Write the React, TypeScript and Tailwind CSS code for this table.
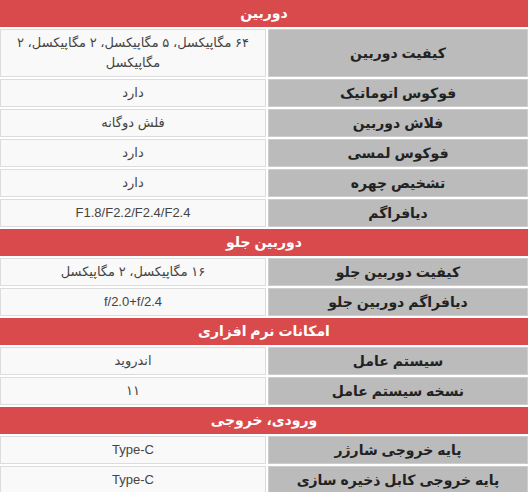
import React from "react";

type Section = {
  title: string;
  rows: { label: string; value: string }[];
};

const sections: Section[] = [
  {
    title: "دوربین",
    rows: [
      { label: "کیفیت دوربین", value: "۶۴ مگاپیکسل، ۵ مگاپیکسل، ۲ مگاپیکسل، ۲ مگاپیکسل" },
      { label: "فوکوس اتوماتیک", value: "دارد" },
      { label: "فلاش دوربین", value: "فلش دوگانه" },
      { label: "فوکوس لمسی", value: "دارد" },
      { label: "تشخیص چهره", value: "دارد" },
      { label: "دیافراگم", value: "F1.8/F2.2/F2.4/F2.4" },
    ],
  },
  {
    title: "دوربین جلو",
    rows: [
      { label: "کیفیت دوربین جلو", value: "۱۶ مگاپیکسل، ۲ مگاپیکسل" },
      { label: "دیافراگم دوربین جلو", value: "f/2.0+f/2.4" },
    ],
  },
  {
    title: "امکانات نرم افزاری",
    rows: [
      { label: "سیستم عامل", value: "اندروید" },
      { label: "نسخه سیستم عامل", value: "۱۱" },
    ],
  },
  {
    title: "ورودی، خروجی",
    rows: [
      { label: "پایه خروجی شارژر", value: "Type-C" },
      { label: "پایه خروجی کابل ذخیره سازی", value: "Type-C" },
    ],
  },
];

const SpecRow = ({ label, value }: { label: string; value: string }) => (
  <div className="grid grid-cols-[260px_1fr] gap-[2px]">
    <div className="flex min-h-[28px] items-center justify-center border border-[#cdcdcd] bg-[#bbbbbb] px-2 text-[14px] font-bold text-[#222]">
      {label}
    </div>
    <div className="flex min-h-[28px] items-center justify-center border border-[#dcdcdc] bg-[#f9f9f9] px-2 py-[3px] text-center text-[13px] leading-[20px] text-[#444]">
      {value}
    </div>
  </div>
);

export default function App() {
  return (
    <div
      dir="rtl"
      className="flex h-[492px] w-[528px] flex-col gap-[2px] overflow-hidden bg-white"
      style={{ fontFamily: '"Liberation Sans", "DejaVu Sans", sans-serif' }}
    >
      {sections.map((s) => (
        <React.Fragment key={s.title}>
          <div className="flex h-[27px] shrink-0 items-center justify-center bg-[#d94a4d] text-[14px] font-bold text-white">
            {s.title}
          </div>
          {s.rows.map((r) => (
            <SpecRow key={r.label} label={r.label} value={r.value} />
          ))}
        </React.Fragment>
      ))}
    </div>
  );
}
